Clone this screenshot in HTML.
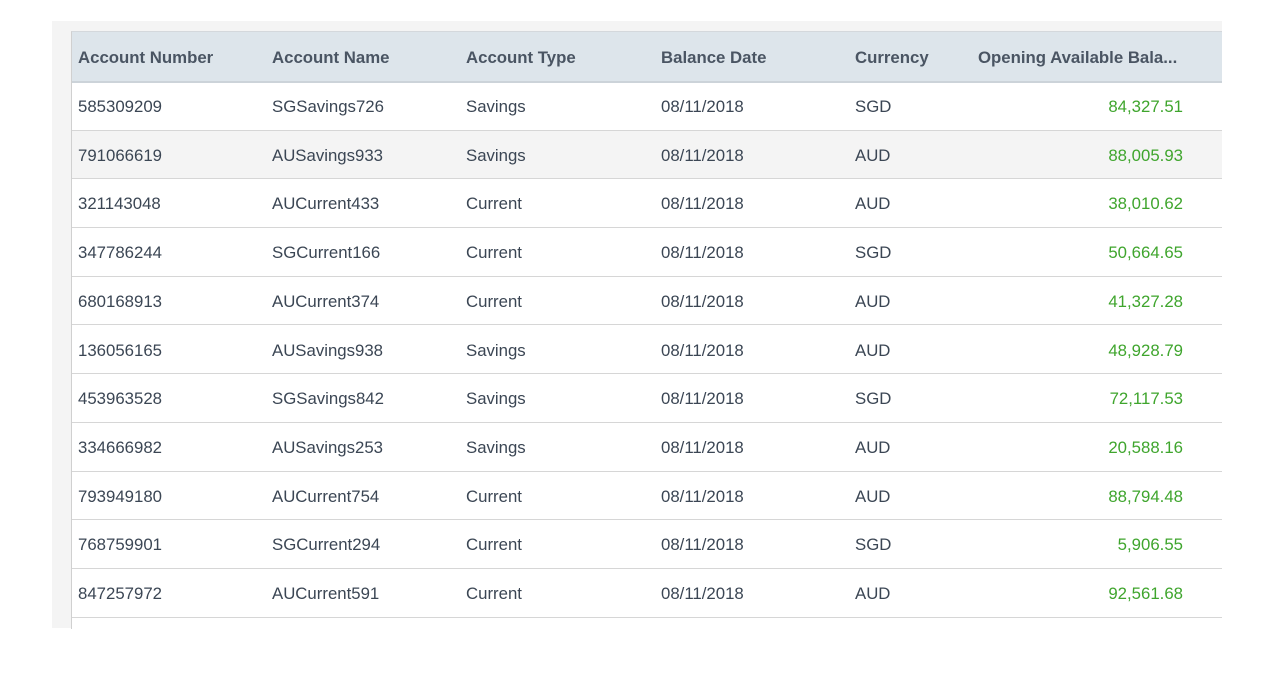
<!DOCTYPE html>
<html><head><style>
body{margin:0;width:1280px;height:696px;background:#fff;font-family:"Liberation Sans",sans-serif;position:relative;overflow:hidden}
.panel{position:absolute;left:52px;top:21px;width:1170px;height:607px;background:#f4f4f4}
.tbl{position:absolute;left:71px;top:31px;width:1150px;height:597px;background:#fff;border-left:1px solid #d0d0d0;border-top:1px solid #d4d8dc}
.row{position:absolute;left:0;width:1150px;height:47.7px;border-bottom:1px solid #d6d6d6;font-size:16.8px;color:#3b4654}
.row span{position:absolute;top:1px;line-height:48px;white-space:nowrap}
.hd{background:#dde5eb;height:49px;border-bottom:2px solid #ccd3d9;font-weight:bold;color:#4a5563}
.hd span{line-height:50px}
.g{color:#3fa52d}
</style></head><body>
<div class="panel"></div>
<div class="tbl" id="t">
<div class="row hd" style="top:0"><span style="left:6px">Account Number</span><span style="left:200px">Account Name</span><span style="left:394px">Account Type</span><span style="left:589px">Balance Date</span><span style="left:783px">Currency</span><span style="left:906px">Opening Available Bala...</span></div>
</div>
<script>
var d=[["585309209","SGSavings726","Savings","SGD","84,327.51"],["791066619","AUSavings933","Savings","AUD","88,005.93"],["321143048","AUCurrent433","Current","AUD","38,010.62"],["347786244","SGCurrent166","Current","SGD","50,664.65"],["680168913","AUCurrent374","Current","AUD","41,327.28"],["136056165","AUSavings938","Savings","AUD","48,928.79"],["453963528","SGSavings842","Savings","SGD","72,117.53"],["334666982","AUSavings253","Savings","AUD","20,588.16"],["793949180","AUCurrent754","Current","AUD","88,794.48"],["768759901","SGCurrent294","Current","SGD","5,906.55"],["847257972","AUCurrent591","Current","AUD","92,561.68"]];
var h="";d.forEach(function(r,i){h+='<div class="row" style="top:'+(50+i*48.7)+'px;'+(i==1?'background:#f4f4f4':'')+'"><span style="left:6px">'+r[0]+'</span><span style="left:200px">'+r[1]+'</span><span style="left:394px">'+r[2]+'</span><span style="left:589px">08/11/2018</span><span style="left:783px">'+r[3]+'</span><span class="g" style="right:39px">'+r[4]+'</span></div>';});
document.getElementById("t").insertAdjacentHTML("beforeend",h);
</script>
</body></html>
